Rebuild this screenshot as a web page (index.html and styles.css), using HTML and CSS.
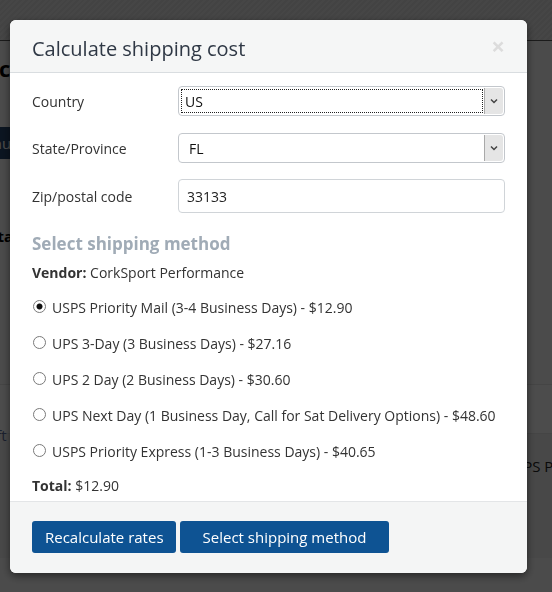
FILE: index.html
```html
<!DOCTYPE html>
<html lang="en">
<head>
    <meta charset="UTF-8">
    <meta name="viewport" content="width=device-width, initial-scale=1.0">
    <title>Calculate shipping cost</title>
    <link rel="stylesheet" href="styles.css">
</head>
<body>
    <div class="topbar"></div>
    <div class="page">
        <h2 class="page-title">cart</h2>
        <button class="page-btn">Continue</button>
        <div class="page-label">Subtotal</div>
        <div class="page-band">
            <div class="page-note">Left</div>
        </div>
        <div class="page-rows">
            <div class="page-method">USPS Priority Mail</div>
        </div>
    </div>

    <div class="backdrop"></div>

    <div class="modal">
        <div class="modal-header">
            <h4 class="modal-title">Calculate shipping cost</h4>
            <span class="close">&times;</span>
        </div>
        <div class="modal-body">
            <div class="form-row">
                <label>Country</label>
                <div class="select">
                    <span class="select-value focused">US</span>
                    <span class="select-arrow">
                        <svg width="8" height="6" viewBox="0 0 8 6"><path d="M1 1.5 L4 4.5 L7 1.5" fill="none" stroke="#444" stroke-width="1.5"/></svg>
                    </span>
                </div>
            </div>
            <div class="form-row">
                <label>State/Province</label>
                <div class="select">
                    <span class="select-value">FL</span>
                    <span class="select-arrow">
                        <svg width="8" height="6" viewBox="0 0 8 6"><path d="M1 1.5 L4 4.5 L7 1.5" fill="none" stroke="#444" stroke-width="1.5"/></svg>
                    </span>
                </div>
            </div>
            <div class="form-row">
                <label>Zip/postal code</label>
                <input class="text-input" type="text" value="33133">
            </div>

            <h3 class="section-title">Select shipping method</h3>
            <div class="vendor"><strong>Vendor:</strong> CorkSport Performance</div>

            <div class="rates" id="rates"></div>

            <div class="total"><strong>Total:</strong> <span id="total">$12.90</span></div>
        </div>
        <div class="modal-footer">
            <button class="btn btn-narrow">Recalculate rates</button>
            <button class="btn btn-wide">Select shipping method</button>
        </div>
    </div>

    <script>
        const rates = [
            { name: 'USPS Priority Mail (3-4 Business Days)', price: 12.90 },
            { name: 'UPS 3-Day (3 Business Days)', price: 27.16 },
            { name: 'UPS 2 Day (2 Business Days)', price: 30.60 },
            { name: 'UPS Next Day (1 Business Day, Call for Sat Delivery Options)', price: 48.60 },
            { name: 'USPS Priority Express (1-3 Business Days)', price: 40.65 }
        ];
        const ratesList = document.getElementById('rates');
        const totalElement = document.getElementById('total');

        rates.forEach((rate, i) => {
            const row = document.createElement('label');
            row.className = 'rate';
            const radio = document.createElement('input');
            radio.type = 'radio';
            radio.name = 'rate';
            radio.checked = i === 0;
            radio.addEventListener('change', () => {
                totalElement.textContent = '$' + rate.price.toFixed(2);
            });
            const text = document.createElement('span');
            text.textContent = `${rate.name} - $${rate.price.toFixed(2)}`;
            row.appendChild(radio);
            row.appendChild(text);
            ratesList.appendChild(row);
        });
    </script>
</body>
</html>
```

FILE: styles.css
```css
body {
    margin: 0;
    padding: 0;
    font-family: "Open Sans", Arial, sans-serif;
    background-color: #fafafa;
    color: #333;
    height: 592px;
    overflow: hidden;
}
.topbar {
    height: 40px;
    background: repeating-linear-gradient(135deg, #ebebeb 0, #ebebeb 2px, #e2e2e2 2px, #e2e2e2 4px);
    border-bottom: 1px solid #5a5a5a;
}
.page {
    padding-top: 12px;
}
.page-title {
    margin: 0 0 0 -1px;
    font-size: 22px;
    font-weight: 700;
    color: #000;
}
.page-btn {
    display: block;
    margin: 44px 0 0 -60px;
    height: 32px;
    padding: 0 16px;
    border: none;
    background-color: #27476e;
    color: #fff;
    font-family: inherit;
    font-size: 15px;
}
.page-label {
    margin: 67px 0 0 -46px;
    font-size: 15px;
    font-weight: 700;
    color: #000;
}
.page-band {
    margin-top: 138px;
    height: 48px;
    background-color: #fdfdfd;
    border-top: 1px solid #e6e6e6;
}
.page-note {
    padding-top: 40px;
    margin-left: -20px;
    font-size: 15px;
    color: #5a6c9a;
}
.page-rows {
    height: 124px;
    background-color: #f2f2f2;
    border-top: 1px solid #e6e6e6;
}
.page-method {
    padding: 22px 0 0 504px;
    font-size: 15px;
    color: #222;
    white-space: nowrap;
}
.backdrop {
    position: fixed;
    inset: 0;
    background-color: rgba(0, 0, 0, 0.7);
}
.modal {
    position: fixed;
    top: 20px;
    left: 10px;
    width: 517px;
    background-color: #fff;
    border-radius: 6px;
    overflow: hidden;
    box-shadow: 0 3px 9px rgba(0, 0, 0, 0.5);
}
.modal-header {
    height: 53px;
    box-sizing: border-box;
    padding: 4px 22px 0;
    display: flex;
    align-items: center;
    justify-content: space-between;
    background-color: #f5f6f6;
    border-bottom: 1px solid #d9dde0;
}
.modal-title {
    margin: 0;
    font-size: 20px;
    font-weight: 400;
    color: #2f3845;
}
.close {
    font-size: 24px;
    font-weight: 700;
    line-height: 1;
    color: #dcdcdc;
    margin-top: -4px;
}
.modal-body {
    padding: 13px 22px 5px;
    font-size: 14px;
}
.form-row {
    display: grid;
    grid-template-columns: 146px 1fr;
    align-items: center;
    margin-bottom: 17px;
}
.form-row:nth-child(2) {
    margin-bottom: 16px;
}
.form-row label {
    color: #333;
}
.select {
    display: flex;
    height: 30px;
    box-sizing: border-box;
    border: 1px solid #c3c7cc;
    border-radius: 4px;
    overflow: hidden;
}
.select-value {
    flex: 1;
    display: flex;
    align-items: center;
    padding-left: 7px;
    margin: 3px 2px 3px 3px;
    color: #111;
    font-size: 14px;
}
.select-value.focused {
    outline: 1px dotted #222;
    padding-left: 3px;
}
.select-arrow {
    width: 18px;
    display: flex;
    align-items: center;
    justify-content: center;
    background-color: #e5e5e5;
    border-left: 1px solid #a9a9a9;
    margin: 1px 1px 1px 0;
    border-radius: 0 3px 3px 0;
}
.text-input {
    height: 34px;
    box-sizing: border-box;
    border: 1px solid #d0d4d8;
    border-radius: 4px;
    padding: 0 8px;
    font-family: inherit;
    font-size: 14px;
    color: #222;
}
.section-title {
    margin: 21px 0 0;
    font-size: 17px;
    line-height: 20px;
    font-weight: 700;
    color: #a0abb6;
}
.vendor {
    margin-top: 9px;
    line-height: 20px;
}
.rates {
    margin-top: 15px;
}
.rate {
    display: flex;
    align-items: center;
    line-height: 20px;
    margin-bottom: 16px;
}
.rate:last-child {
    margin-bottom: 0;
}
.rate input {
    appearance: none;
    -webkit-appearance: none;
    box-sizing: border-box;
    margin: -4px 6px 0 1px;
    width: 13px;
    height: 13px;
    border: 1px solid #7a7a7a;
    border-radius: 50%;
    background-color: #fff;
    flex-shrink: 0;
}
.rate input:checked {
    background: radial-gradient(circle, #111 0, #111 2.6px, #fff 3.4px);
}
.total {
    margin-top: 14px;
    line-height: 20px;
}
.modal-footer {
    padding: 19px 22px 20px;
    display: flex;
    gap: 4px;
    background-color: #f4f5f5;
    border-top: 1px solid #e3e5e7;
}
.btn {
    height: 32px;
    padding: 0 16px;
    border: none;
    border-radius: 3px;
    background-color: #0e5393;
    color: #fff;
    font-family: inherit;
    font-size: 15px;
    cursor: pointer;
}
.btn-narrow {
    padding: 0 12px 0 13px;
}
.btn-wide {
    padding: 0 23px;
}
.btn:hover {
    background-color: #0b447a;
}
```
